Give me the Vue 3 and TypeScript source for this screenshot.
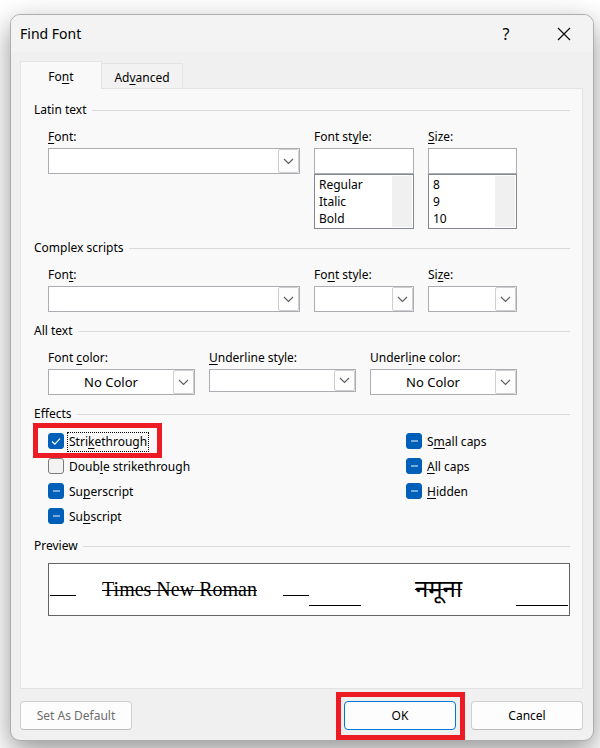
<script setup lang="ts">
import { h, ref, type FunctionalComponent } from 'vue'

// Renders a caption whose access key, marked with "&", is underlined.
const Caption: FunctionalComponent<{ text: string }> = (props) => {
  const at = props.text.indexOf('&')
  if (at < 0) return h('span', props.text)
  return h('span', [
    props.text.slice(0, at),
    h('u', props.text[at + 1]),
    props.text.slice(at + 2),
  ])
}
Caption.props = ['text']

interface Effect {
  id: string
  text: string
  state: 'on' | 'off' | 'mixed'
}

interface Drop {
  id: string
  text: string
  value: string
  short?: boolean
}

const leftEffects = ref<Effect[]>([
  { id: 'strike', text: 'Stri&kethrough', state: 'on' },
  { id: 'double-strike', text: 'Doub&le strikethrough', state: 'off' },
  { id: 'superscript', text: 'Su&perscript', state: 'mixed' },
  { id: 'subscript', text: 'Su&bscript', state: 'mixed' },
])
const rightEffects = ref<Effect[]>([
  { id: 'small-caps', text: 'S&mall caps', state: 'mixed' },
  { id: 'all-caps', text: '&All caps', state: 'mixed' },
  { id: 'hidden', text: '&Hidden', state: 'mixed' },
])

const complexDrops: Drop[] = [
  { id: 'cs-font', text: 'Fon&t:', value: '' },
  { id: 'cs-style', text: 'Fo&nt style:', value: '' },
  { id: 'cs-size', text: 'Si&ze:', value: '' },
]
const textDrops: Drop[] = [
  { id: 'font-color', text: 'Font &color:', value: 'No Color' },
  { id: 'underline-style', text: '&Underline style:', value: '', short: true },
  { id: 'underline-color', text: 'Underl&ine color:', value: 'No Color' },
]
const styles = ['Regular', 'Italic', 'Bold']
const sizes = ['8', '9', '10']
const chosenStyle = ref<string | null>(null)
const chosenSize = ref<string | null>(null)

function toggle(effect: Effect) {
  effect.state = effect.state === 'on' ? 'off' : 'on'
}
</script>

<template>
  <main class="dialog" role="dialog" aria-labelledby="dialog-title">
    <header class="titlebar">
      <h1 id="dialog-title">Find Font</h1>
      <button type="button" class="caption-button" aria-label="Help">?</button>
      <button type="button" class="caption-button" aria-label="Close">
        <svg width="14" height="14" viewBox="0 0 14 14">
          <path d="M1 1L13 13M13 1L1 13" fill="none" stroke="#111" stroke-width="1.3" />
        </svg>
      </button>
    </header>

    <div class="body">
      <div class="tabs" role="tablist">
        <button type="button" role="tab" aria-selected="true" class="tab active"><Caption text="Fo&nt" /></button>
        <button type="button" role="tab" aria-selected="false" class="tab"><Caption text="Ad&vanced" /></button>
      </div>

      <div class="panel" role="tabpanel">
        <section class="group">
          <h2>Latin text</h2>
          <div class="fields font-fields">
            <div class="field">
              <label for="latin-font"><Caption text="&Font:" /></label>
              <div class="drop">
                <select id="latin-font"><option></option></select>
                <span class="arrow">
                  <svg width="11" height="7" viewBox="0 0 11 7"><path d="M1 1L5.5 5.5L10 1" /></svg>
                </span>
              </div>
            </div>
            <div class="field">
              <label for="latin-style"><Caption text="Font st&yle:" /></label>
              <input id="latin-style" type="text" />
              <div class="list">
                <select v-model="chosenStyle" size="3" aria-label="Font styles">
                  <option v-for="s in styles" :key="s" :value="s">{{ s }}</option>
                </select>
                <span class="track"></span>
              </div>
            </div>
            <div class="field">
              <label for="latin-size"><Caption text="&Size:" /></label>
              <input id="latin-size" type="text" />
              <div class="list">
                <select v-model="chosenSize" size="3" aria-label="Font sizes">
                  <option v-for="s in sizes" :key="s" :value="s">{{ s }}</option>
                </select>
                <span class="track"></span>
              </div>
            </div>
          </div>
        </section>

        <section class="group">
          <h2>Complex scripts</h2>
          <div class="fields font-fields">
            <div v-for="d in complexDrops" :key="d.id" class="field">
              <label :for="d.id"><Caption :text="d.text" /></label>
              <div class="drop">
                <select :id="d.id"><option>{{ d.value }}</option></select>
                <span class="arrow">
                  <svg width="11" height="7" viewBox="0 0 11 7"><path d="M1 1L5.5 5.5L10 1" /></svg>
                </span>
              </div>
            </div>
          </div>
        </section>

        <section class="group">
          <h2>All text</h2>
          <div class="fields text-fields">
            <div v-for="d in textDrops" :key="d.id" class="field">
              <label :for="d.id"><Caption :text="d.text" /></label>
              <div class="drop" :class="{ short: d.short }">
                <select :id="d.id"><option>{{ d.value }}</option></select>
                <span class="arrow">
                  <svg width="11" height="7" viewBox="0 0 11 7"><path d="M1 1L5.5 5.5L10 1" /></svg>
                </span>
              </div>
            </div>
          </div>
        </section>

        <section class="group effects-group">
          <h2>Effects</h2>
          <div class="effects">
            <div v-for="(column, c) in [leftEffects, rightEffects]" :key="c">
              <div v-for="e in column" :key="e.id" class="effect" :class="{ marked: e.id === 'strike' }">
                <input
                  :id="e.id"
                  type="checkbox"
                  :class="e.state"
                  :checked="e.state === 'on'"
                  :indeterminate="e.state === 'mixed'"
                  @change="toggle(e)"
                />
                <svg class="mark" width="16" height="16" viewBox="0 0 16 16">
                  <path v-if="e.state === 'on'" d="M4 8.5L6.8 11.2L12 5.7" stroke="#fff" stroke-width="1.2" />
                  <path v-else-if="e.state === 'mixed'" d="M5 8H12" stroke="#78abdc" stroke-width="2" />
                </svg>
                <label :for="e.id"><Caption :text="e.text" /></label>
              </div>
            </div>
          </div>
        </section>

        <section>
          <h2>Preview</h2>
          <div class="preview">
            <div class="sample latin">
              <i></i><s>Times New Roman</s><i></i>
            </div>
            <div class="sample hindi" lang="hi">
              <i></i><s>नमूना</s><i></i>
            </div>
          </div>
        </section>
      </div>

      <footer class="footer">
        <button type="button" class="push" disabled>Set As Default</button>
        <span class="ok-wrap"><button type="button" class="push primary">OK</button></span>
        <button type="button" class="push">Cancel</button>
      </footer>
    </div>
  </main>
</template>

<style>
body {
  background: #fff;
}
#app {
  display: flow-root;
  overflow: hidden;
}
</style>

<style scoped>
*,
*::after {
  box-sizing: border-box;
}
.dialog {
  margin: 14px 6px 7px 10px;
  border: 1px solid #adadad;
  border-radius: 10px;
  background: #f0f0f0;
  box-shadow: 0 10px 28px rgba(0, 0, 0, 0.42);
  font-family: "Noto Sans", "Open Sans", sans-serif;
  font-size: 12px;
  line-height: 18px;
  color: #000;
}
button,
input,
select {
  font: inherit;
  color: inherit;
  margin: 0;
}
.dialog :deep(u) {
  text-decoration: underline;
  text-decoration-thickness: 1px;
  text-underline-offset: 2px;
  text-decoration-skip-ink: none;
}
.titlebar {
  display: flex;
  align-items: center;
  height: 37px;
  padding-left: 9px;
  background: #f3f3f3;
  border-radius: 9px 9px 0 0;
}
h1 {
  flex: 1;
  margin: 0;
  font-size: 14px;
  font-weight: 400;
}
.caption-button {
  display: flex;
  align-items: center;
  justify-content: center;
  width: 58px;
  height: 37px;
  padding: 0;
  border: 0;
  background: none;
  font-size: 16px;
}
.body {
  padding: 9px 10px 10px 9px;
}
.tabs {
  display: flex;
  align-items: flex-end;
}
.tab {
  height: 25px;
  padding: 3px 10px 0;
  min-width: 81px;
  border: 1px solid #e3e3e3;
  border-width: 1px 1px 0 0;
  background: #f2f2f2;
}
.tab.active {
  position: relative;
  min-width: 82px;
  height: 28px;
  margin-bottom: -1px;
  border-width: 1px 1px 0 1px;
  background: #f9f9f9;
}
.panel {
  padding: 11px 12px 72px 13px;
  border: 1px solid #e3e3e3;
  background: #f9f9f9;
}
.group {
  margin-bottom: 9px;
}
.effects-group {
  margin-bottom: 8px;
}
h2 {
  display: flex;
  align-items: center;
  gap: 5px;
  margin: 0;
  font-size: 12px;
  font-weight: 400;
  line-height: 20px;
}
h2::after {
  content: "";
  flex: 1;
  height: 1px;
  background: #dadada;
}
.fields {
  display: grid;
  gap: 14px;
  padding: 8px 53px 0 14px;
}
.font-fields {
  grid-template-columns: 252fr 100fr 89fr;
}
.text-fields {
  grid-template-columns: repeat(3, 1fr);
}
.field {
  display: flex;
  flex-direction: column;
  min-width: 0;
}
.field label {
  margin-bottom: 2px;
  white-space: nowrap;
}
.field input,
.drop {
  width: 100%;
  height: 26px;
  border: 1px solid #abadb3;
  border-radius: 0;
  background: #fff;
}
.drop {
  display: flex;
}
.drop.short {
  height: 23px;
}
.drop select {
  flex: 1;
  min-width: 0;
  padding: 0;
  border: 0;
  background: none;
  appearance: none;
  font-size: 13px;
  text-align: center;
  text-align-last: center;
}
.arrow {
  display: flex;
  align-items: center;
  justify-content: center;
  width: 21px;
  border: 1px solid #cfcfcf;
  border-radius: 2px;
  background: #fdfdfd;
}
.arrow path {
  fill: none;
  stroke: #606060;
  stroke-width: 1.2;
}
.list {
  display: flex;
  height: 55px;
  padding: 1px;
  border: 1px solid #828790;
  background: #fff;
}
.list select {
  flex: 1;
  min-width: 0;
  height: 51px;
  padding: 0;
  border: 0;
  border-radius: 0;
  background: #fff;
  appearance: none;
  overflow: hidden;
}
.list option {
  height: 17px;
  min-height: 17px;
  padding: 0 3px;
  line-height: 17px;
}
.track {
  width: 20px;
  background: #f0f0f0;
}
.effects {
  display: grid;
  grid-template-columns: 358fr 164fr;
  padding: 4px 0 0 14px;
}
.effect {
  position: relative;
  display: grid;
  grid-template-columns: 16px auto;
  justify-content: start;
  align-items: center;
  column-gap: 3px;
  height: 25px;
}
.effect input {
  grid-area: 1 / 1;
  width: 16px;
  height: 16px;
  border: 1px solid #005fb8;
  border-radius: 3px;
  background: #005fb8;
  appearance: none;
}
.effect input.off {
  border-color: #7a7a7a;
  background: #f3f3f3;
}
.mark {
  grid-area: 1 / 1;
  pointer-events: none;
  fill: none;
}
.effect label {
  grid-area: 1 / 2;
  margin-top: 2px;
  padding: 0 1px;
  border: 1px dotted transparent;
  white-space: nowrap;
}
.marked label {
  border-color: #000;
}
.marked::after {
  content: "";
  position: absolute;
  top: -5px;
  left: -15px;
  width: 129px;
  height: 35px;
  border: 5px solid #ed1c24;
  pointer-events: none;
}
.preview {
  display: flex;
  height: 53px;
  margin: 7px 0 0 14px;
  padding: 0 1px 2px;
  border: 1px solid #646464;
  background: #fff;
}
.sample {
  display: flex;
  flex: 1;
  align-items: center;
  justify-content: space-between;
  font-size: 20px;
  line-height: 24px;
  white-space: nowrap;
}
.sample s {
  text-decoration-thickness: 1px;
}
.sample i {
  width: 26px;
  height: 14px;
  border-bottom: 1px solid #000;
}
.latin {
  font-family: "Liberation Serif", serif;
}
.hindi {
  font-family: "Noto Sans Devanagari", "Noto Sans", sans-serif;
  font-size: 24px;
}
.hindi s {
  padding-top: 4px;
}
.hindi i {
  width: 52px;
  height: 34px;
}
.footer {
  display: flex;
  gap: 15px;
  padding-top: 12px;
}
.push {
  width: 112px;
  height: 29px;
  padding: 0;
  border: 1px solid #d0d0d0;
  border-bottom-color: #bcbcbc;
  border-radius: 4px;
  background: #fdfdfd;
}
.push:disabled {
  margin-right: auto;
  color: #6d6d6d;
}
.push.primary {
  border-color: #0078d4;
}
.ok-wrap {
  position: relative;
  display: flex;
}
.ok-wrap::after {
  content: "";
  position: absolute;
  top: -9px;
  left: -8px;
  width: 129px;
  height: 48px;
  border: 5px solid #ed1c24;
  pointer-events: none;
}
</style>
